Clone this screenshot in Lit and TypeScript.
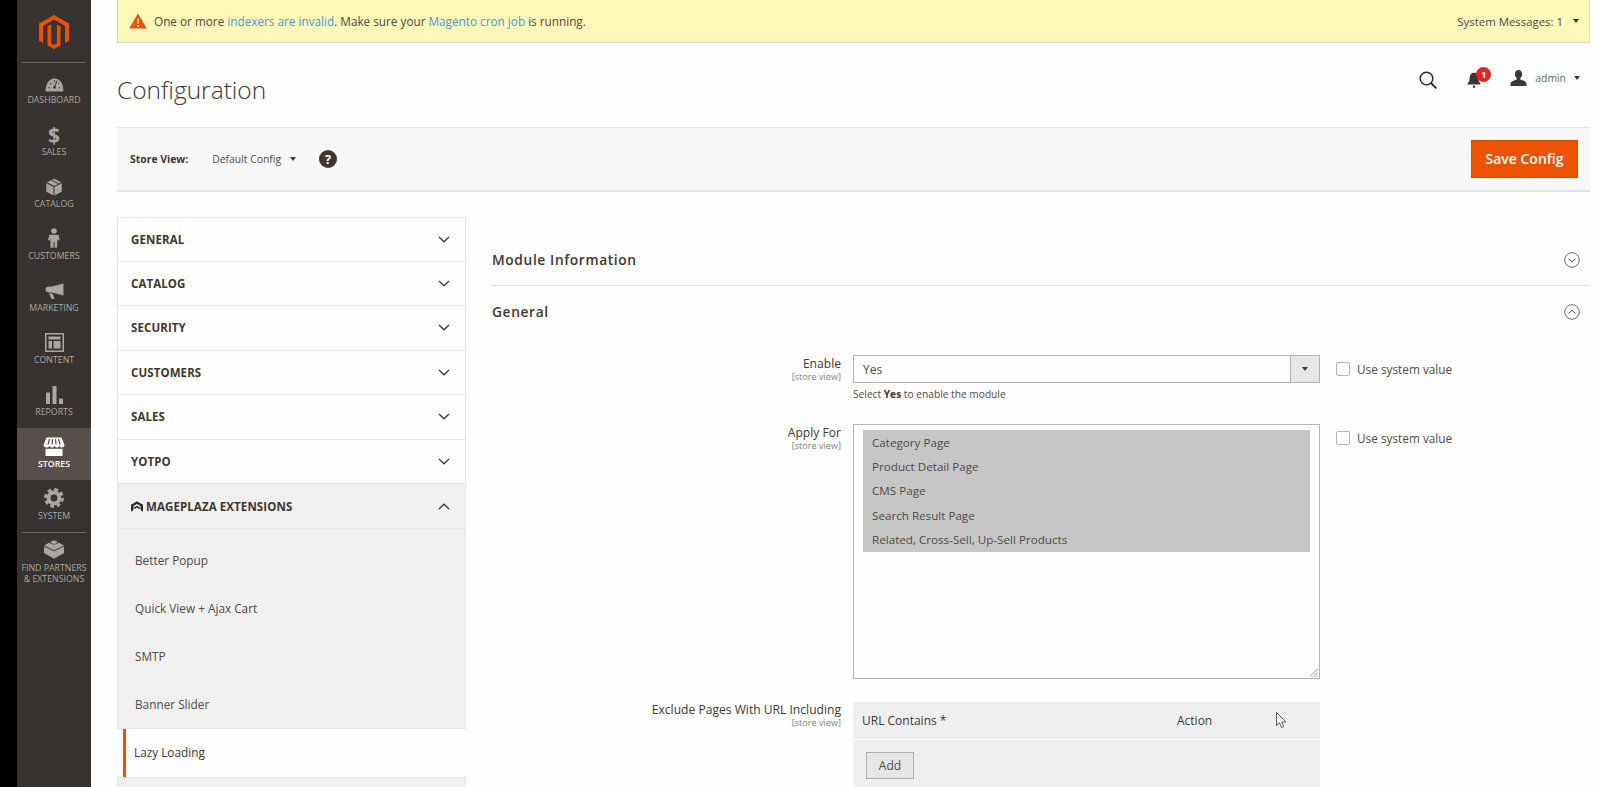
import { LitElement, html, css, svg } from "lit";
import { customElement } from "lit/decorators.js";

const icons: Record<string, unknown> = {
  dashboard: svg`<svg width="19" height="14" viewBox="0 0 20 15"><path d="M.5 14.500C.2 6 4.500.5 10 .5s9.800 5.500 9.500 14z" fill="#aaa6a0"/><path d="M12.800 3 10 9.500M3.500 10.500h1.500M5.500 5.500l1 1M10 2.500v1.500M16 10.500h-1.500M15 5.800l-1 .8" stroke="#373330" stroke-width="1.100"/><circle cx="10" cy="10" r="1.500" fill="#373330"/></svg>`,
  catalog: svg`<svg width="16" height="18" viewBox="0 0 16 18"><path d="M.3 5.200 7.500 9v8.600L.3 13.800zM15.700 5.200 8.500 9v8.600l7.200-3.800z" fill="#aaa6a0"/><path d="M1 4.200 4.800 2.200l7.300 3.900-3.900 2zM5.800 1.700 8 .5l7 3.700-2 1.400z" fill="#aaa6a0"/></svg>`,
  customers: svg`<svg width="12" height="20" viewBox="0 0 12 20"><circle cx="6" cy="3" r="2.800" fill="#aaa6a0"/><path d="M1.500 6.800h9L11.600 12l-1.700.4-.5-2-.3 9.300H6.500V14h-1v5.700H2.500l-.3-9.300-.5 2-1.700-.4z" fill="#aaa6a0"/></svg>`,
  marketing: svg`<svg width="19" height="17" viewBox="0 0 19 17"><path d="M18.500.5v12L7 9.500H4.500c-2.500 0-4-1-4-3s1.500-3 4-3H7z" fill="#aaa6a0"/><path d="M4 10.500h3.500l2 5.500H6.500z" fill="#aaa6a0"/></svg>`,
  content: svg`<svg width="19" height="19" viewBox="0 0 19 19"><path fill-rule="evenodd" d="M0 0h19v19H0zM1.500 1.500v16h16v-16z" fill="#aaa6a0"/><path d="M3.500 3.500h12v3h-12zM3.500 8h3.500v7.500H3.500zM8.500 8h7v7.500h-7z" fill="#aaa6a0"/></svg>`,
  reports: svg`<svg width="17" height="18" viewBox="0 0 17 18"><path d="M0 6.500h4V18H0zM6.500 0h4v18h-4zM13 12.500h4V18h-4z" fill="#aaa6a0"/></svg>`,
  stores: svg`<svg width="22" height="19" viewBox="0 0 22 19"><path d="M3.500.5h15l3 7.500c0 1.600-1.300 2.500-2.600 2.500-1.100 0-2-.6-2.500-1.500-.5.900-1.500 1.500-2.500 1.500s-2-.6-2.400-1.500c-.4.900-1.400 1.500-2.500 1.500s-2-.6-2.500-1.500c-.5.900-1.400 1.500-2.500 1.500C1.800 10.500.500 9.600.500 8z" fill="#fff"/><path d="M6.500 2 5 7.500M9.500 2 9 7.500M12.500 2l.5 5.500M15.500 2 17 7.500" stroke="#514943" stroke-width="1.200"/><path d="M2.500 11.800h17V19h-17z" fill="#fff"/></svg>`,
  system: svg`<svg width="20" height="20" viewBox="0 0 20 20"><circle cx="10" cy="10" r="5.400" fill="none" stroke="#aaa6a0" stroke-width="4"/><circle cx="10" cy="10" r="8.200" fill="none" stroke="#aaa6a0" stroke-width="3.400" stroke-dasharray="3.600 2.840"/></svg>`,
  partners: svg`<svg width="20" height="19" viewBox="0 0 20 19"><path d="M0 6.500 10 11.200 20 6.500V13l-10 5.800L0 13z" fill="#aaa6a0"/><path d="M0 5.500 6 2.300c0 1.400 1.800 2.200 4 2.200s4-.8 4-2.200l6 3.200-10 4.700z" fill="#aaa6a0"/><ellipse cx="10" cy="2.200" rx="3" ry="1.700" fill="#aaa6a0"/></svg>`,
};

const menu = [
  { k: "dashboard", t: "DASHBOARD" },
  { k: "sales", t: "SALES" },
  { k: "catalog", t: "CATALOG" },
  { k: "customers", t: "CUSTOMERS" },
  { k: "marketing", t: "MARKETING" },
  { k: "content", t: "CONTENT" },
  { k: "reports", t: "REPORTS" },
  { k: "stores", t: "STORES", active: true },
  { k: "system", t: "SYSTEM" },
];

const chevron = (up = false) => svg`<svg class="chev" width="12" height="7" viewBox="0 0 12 7"><polyline points=${up ? "1,6 6,1.200 11,6" : "1,1 6,5.800 11,1"} fill="none" stroke="#41362f" stroke-width="1.300"/></svg>`;

const roundChev = (up = false) => svg`<svg width="16" height="16" viewBox="0 0 16 16"><circle cx="8" cy="8" r="7.300" fill="none" stroke="#5f6a6e" stroke-width="1"/><polyline points=${up ? "4.500,9.500 8,6.300 11.500,9.500" : "4.500,6.700 8,9.800 11.500,6.700"} fill="none" stroke="#4a4542" stroke-width="1"/></svg>`;

@customElement("app-root")
export class AppRoot extends LitElement {
  static styles = css`
    :host { display: block; height: 787px; overflow: hidden; background: #fefefe; font-family: "Open Sans", sans-serif; color: #41362f; font-size: 12px; }
    * { box-sizing: border-box; }
    a { color: #4b96dc; text-decoration: none; }
    .root { display: flex; height: 787px; }
    .black { width: 17px; background: #000; flex: none; }
    .side { width: 74px; flex: none; background: #373330; color: #aaa6a0; display: flex; flex-direction: column; }
    .logo { height: 63px; margin: 0 5px; border-bottom: 1px solid #6b6661; display: flex; justify-content: center; padding-top: 15px; }
    .mi { height: 52.100px; display: flex; flex-direction: column; align-items: center; justify-content: flex-end; padding-bottom: 9.500px; gap: 3px; font-size: 8.800px; line-height: 11px; text-align: center; }
    .mi.active { background-color: #514943; background-image: radial-gradient(circle, #5f5751 0.6px, transparent 0.8px); background-size: 2px 2px; color: #fff; font-weight: 600; }
    .ic { height: 20px; display: flex; align-items: flex-end; justify-content: center; }
    .dollar { font-weight: 700; font-size: 21px; line-height: 20px; color: #aaa6a0; position: relative; top: 1px; }
    .sep { height: 1px; background: #6b6661; margin: 0 5px; }
    .mi.partners { height: 60px; justify-content: flex-start; padding: 6px 0 0; gap: 4px; white-space: nowrap; }
    .main { flex: 1; min-width: 0; padding: 0 10px 0 26px; }
    .banner { height: 43px; background: #fdf8b8; border: 1px solid #d8d8d0; border-top: 0; display: flex; align-items: center; padding: 0 10px 0 11px; font-size: 11.760px; color: #514943; }
    .banner svg.warn { margin-right: 7px; }
    .sysmsg { margin-left: auto; display: flex; align-items: center; gap: 10px; font-size: 11.400px; }
    .tri { width: 0; height: 0; border-left: 3.500px solid transparent; border-right: 3.500px solid transparent; border-top: 4px solid #41362f; display: inline-block; }
    .head { height: 84px; display: flex; align-items: center; justify-content: space-between; padding-top: 12px; }
    h1 { font-size: 24.500px; font-weight: 300; margin: 0; color: #41362f; line-height: 30px; position: relative; top: -1px; }
    .acts { display: flex; align-items: center; margin-top: -23px; padding-right: 10px; }
    .bell { position: relative; margin-left: 30px; display: flex; }
    .badge { position: absolute; left: 9px; top: -5px; width: 15px; height: 15px; border-radius: 50%; background: #e22626; color: #fff; font-size: 9px; font-weight: 700; display: flex; align-items: center; justify-content: center; }
    .user { display: flex; align-items: center; margin-left: 29px; margin-top: -4px; font-size: 10.400px; color: #5f6a6e; gap: 8px; }
    .bar { height: 65px; background-color: #f8f8f8; background-image: radial-gradient(circle, #fdfdf8 0.5px, transparent 0.7px); background-size: 2px 2px; border-top: 1px solid #e6e6e6; border-bottom: 2px solid #e6e6e6; display: flex; align-items: center; padding: 0 13px; }
    .bar b { font-size: 10.400px; font-weight: 700; color: #41362f; }
    .scope { font-size: 10.400px; margin-left: 24px; display: flex; align-items: center; gap: 9px; color: #514943; }
    .help { margin-left: 23px; width: 18px; height: 18px; border-radius: 50%; background: #41362f; color: #fff; font-size: 13px; font-weight: 700; display: flex; align-items: center; justify-content: center; }
    .save { margin-left: auto; margin-right: -1px; width: 107px; height: 38px; padding-bottom: 2px; background: #eb5202; color: #fff; font-size: 14px; font-weight: 600; border: 1px solid #d84c02; display: flex; align-items: center; justify-content: center; }
    .cols { display: flex; margin-top: 25px; gap: 25px; }
    .nav { width: 349px; flex: none; }
    .nrow { height: 44.550px; border: 1px solid #e5e5e5; border-top: 0; display: flex; align-items: center; justify-content: space-between; padding: 0 15px 0 13px; font-size: 11.500px; font-weight: 700; color: #41362f; letter-spacing: 0.1px; }
    .nrow:first-child { border-top: 1px solid #e5e5e5; }
    .gray { background-color: #f0f0f0; background-image: radial-gradient(circle, #fafaf2 0.5px, transparent 0.7px); background-size: 2px 2px; }
    .nrow.open { gap: 3px; justify-content: flex-start; }
    .nrow.open .chev { margin-left: auto; }
    .subs { padding-top: 7px; border: 1px solid #e5e5e5; border-top: 0; }
    .sub { height: 48.100px; display: flex; align-items: center; padding-left: 17px; font-size: 11.800px; color: #514943; }
    .cur { height: 48px; margin-left: 6px; border-left: 3px solid #eb5202; display: flex; align-items: center; padding: 0 0 2px 8px; color: #41362f; font-size: 11.800px; font-weight: 500; }
    .tail { height: 12px; border: 1px solid #e5e5e5; border-bottom: 0; }
    .content { flex: 1; min-width: 0; }
    .sec { display: flex; align-items: center; justify-content: space-between; padding: 0 10px 0 1px; font-size: 13.800px; font-weight: 600; letter-spacing: 0.6px; color: #41362f; }
    .sec.a { height: 69px; padding-top: 17px; border-bottom: 1px solid #dedede; }
    .sec.b { height: 51px; }
    .row { display: grid; grid-template-columns: 350px 467px auto; column-gap: 12px; }
    .row.r1 { margin-top: 18px; }
    .row.r2 { margin-top: 23px; }
    .row.r3 { margin-top: 23px; }
    .lab { text-align: right; font-size: 12.100px; font-weight: 500; color: #41362f; line-height: 14px; padding-top: 2px; }
    .row.r3 .lab { padding-top: 1px; }
    .lab small { display: block; font-size: 9.100px; font-weight: 400; color: #808080; line-height: 12px; }
    .select { height: 28px; border: 1px solid #b4b4b4; display: flex; align-items: center; justify-content: space-between; padding-left: 9px; font-size: 12px; color: #514943; }
    .caret { width: 29px; height: 100%; border-left: 1px solid #b4b4b4; background: #e6e6e6; display: flex; align-items: center; justify-content: center; }
    .note { font-size: 10.200px; color: #514943; margin-top: 5px; line-height: 13px; }
    .note b { font-weight: 700; color: #41362f; }
    .usv { display: flex; align-items: center; height: 28px; gap: 7px; margin-left: 4px; font-size: 11.800px; color: #514943; }
    .usv i { width: 14px; height: 14px; border: 1px solid #b4b4b4; border-radius: 2px; background: #fff; display: block; }
    .multi { height: 255px; border: 1px solid #b4b4b4; padding: 5px 9px; position: relative; }
    .opts { background: #c6c6c6; height: 122px; }
    .opt { height: 24.400px; padding-left: 9px; display: flex; align-items: center; font-size: 11.650px; color: #514943; }
    .grip { position: absolute; right: 1px; bottom: 1px; }
    .tbl { position: relative; height: 90px; background-color: #efefef; background-image: radial-gradient(circle, #fafaf2 0.5px, transparent 0.7px); background-size: 2px 2px; }
    .thead { height: 38px; border-bottom: 1px solid #fff; display: grid; grid-template-columns: 315px auto; align-items: center; padding-left: 9px; font-size: 12px; font-weight: 500; color: #41362f; }
    .add { margin: 12px 0 0 13px; width: 48px; height: 27px; border: 1px solid #adadad; background: #e6e6e6; display: flex; align-items: center; justify-content: center; font-size: 12px; color: #514943; }
    .cursor { position: absolute; left: 423px; top: 10px; }
    .mp { flex: none; }
  `;

  render() {
    return html`<div class="root">
      <div class="black"></div>
      <aside class="side">
        <div class="logo">
          <svg width="30" height="34" viewBox="0 0 30 34"><path d="M15 0 30 8.600v17.200l-4 2.300V10.900L15 4.600 4 10.900v17.200l-4-2.300V8.600z" fill="#eb5202"/><path d="M15 34l-6.500-3.700V11.500l3.600-2.100v19l2.900 1.700 2.900-1.700v-19l3.600 2.100v18.800z" fill="#eb5202"/></svg>
        </div>
        ${menu.map((m) => html`
          <div class="mi ${m.active ? "active" : ""}">
            <div class="ic">${m.k === "sales" ? html`<span class="dollar">$</span>` : icons[m.k]}</div>
            <span>${m.t}</span>
          </div>`)}
        <div class="sep"></div>
        <div class="mi partners">
          <div class="ic">${icons.partners}</div>
          <span>FIND PARTNERS<br />&amp; EXTENSIONS</span>
        </div>
      </aside>
      <main class="main">
        <div class="banner">
          <svg class="warn" width="18" height="16" viewBox="0 0 18 16"><path d="M9 .5 17.800 15.500H.2z" fill="#eb5202"/><path d="M8.200 5.500h1.600l-.3 5.500h-1zM8.100 12h1.800v1.700H8.100z" fill="#fff"/></svg>
          <span>One or more <a>indexers are invalid</a>. Make sure your <a>Magento cron job</a> is running.</span>
          <span class="sysmsg">System Messages: 1 <i class="tri"></i></span>
        </div>
        <div class="head">
          <h1>Configuration</h1>
          <div class="acts">
            <svg width="18" height="18" viewBox="0 0 18 18"><circle cx="7.500" cy="7.500" r="6.300" fill="none" stroke="#2c2825" stroke-width="1.500"/><path d="M12 12l5.300 5.300" stroke="#2c2825" stroke-width="1.800"/></svg>
            <div class="bell">
              <svg width="14" height="16" viewBox="0 0 14 16"><path d="M7 .8c2.800 0 4.300 2 4.300 5 0 3 1 4.500 2.200 5.700v1H.5v-1C1.700 10.300 2.700 8.800 2.700 5.800c0-3 1.500-5 4.300-5z" fill="#41362f"/><circle cx="7" cy="14.800" r="1.200" fill="#41362f"/></svg>
              <span class="badge">1</span>
            </div>
            <div class="user">
              <svg width="17" height="16" viewBox="0 0 17 16"><path d="M8.500 0c2.400 0 3.600 1.800 3.600 4 0 2-1 3.500-1.800 4.300v1.200c2 1 6.200 1.400 6.200 4.500V16H.5v-2c0-3.100 4.200-3.500 6.200-4.500V8.300C5.900 7.500 4.900 6 4.900 4c0-2.200 1.200-4 3.600-4z" fill="#41362f"/></svg>
              <span>admin</span>
              <i class="tri"></i>
            </div>
          </div>
        </div>
        <div class="bar">
          <b>Store View:</b>
          <span class="scope">Default Config <i class="tri"></i></span>
          <span class="help">?</span>
          <span class="save">Save Config</span>
        </div>
        <div class="cols">
          <nav class="nav">
            ${["GENERAL", "CATALOG", "SECURITY", "CUSTOMERS", "SALES", "YOTPO"].map((t) => html`<div class="nrow"><span>${t}</span>${chevron()}</div>`)}
            <div class="nrow open gray">
              <svg class="mp" width="12" height="11" viewBox="0 0 14 12"><path d="M7 0 14 4v8l-2.800-2V5.500L7 3 2.800 5.500V10L0 12V4z" fill="#2c2825"/><path d="M7 5 11 7.500 9.500 8.800 7 7.300 4.500 8.800 3 7.500z" fill="#2c2825"/></svg>
              <span>MAGEPLAZA EXTENSIONS</span>${chevron(true)}
            </div>
            <div class="subs gray">
              ${["Better Popup", "Quick View + Ajax Cart", "SMTP", "Banner Slider"].map((t) => html`<div class="sub">${t}</div>`)}
            </div>
            <div class="cur">Lazy Loading</div>
            <div class="tail gray"></div>
          </nav>
          <section class="content">
            <div class="sec a"><span>Module Information</span>${roundChev()}</div>
            <div class="sec b"><span>General</span>${roundChev(true)}</div>
            <div class="row r1">
              <div class="lab">Enable<small>[store view]</small></div>
              <div>
                <div class="select"><span>Yes</span><span class="caret"><i class="tri"></i></span></div>
                <div class="note">Select <b>Yes</b> to enable the module</div>
              </div>
              <div class="usv"><i></i><span>Use system value</span></div>
            </div>
            <div class="row r2">
              <div class="lab">Apply For<small>[store view]</small></div>
              <div class="multi">
                <div class="opts">
                  ${["Category Page", "Product Detail Page", "CMS Page", "Search Result Page", "Related, Cross-Sell, Up-Sell Products"].map((t) => html`<div class="opt">${t}</div>`)}
                </div>
                <svg class="grip" width="9" height="9" viewBox="0 0 9 9"><path d="M8.500 1 1 8.500M8.500 4.500 4.500 8.500M8.500 7 7 8.500" stroke="#777" stroke-width="0.800"/></svg>
              </div>
              <div class="usv"><i></i><span>Use system value</span></div>
            </div>
            <div class="row r3">
              <div class="lab">Exclude Pages With URL Including<small>[store view]</small></div>
              <div class="tbl">
                <div class="thead"><span>URL Contains *</span><span>Action</span></div>
                <div class="add">Add</div>
                <svg class="cursor" width="11" height="17" viewBox="0 0 11 17"><path d="M.5.500v13l3-2.800 2 4.800 2.200-1-2-4.500h4.300z" fill="#fff" stroke="#333" stroke-width="0.800"/></svg>
              </div>
              <div></div>
            </div>
          </section>
        </div>
      </main>
    </div>`;
  }
}
